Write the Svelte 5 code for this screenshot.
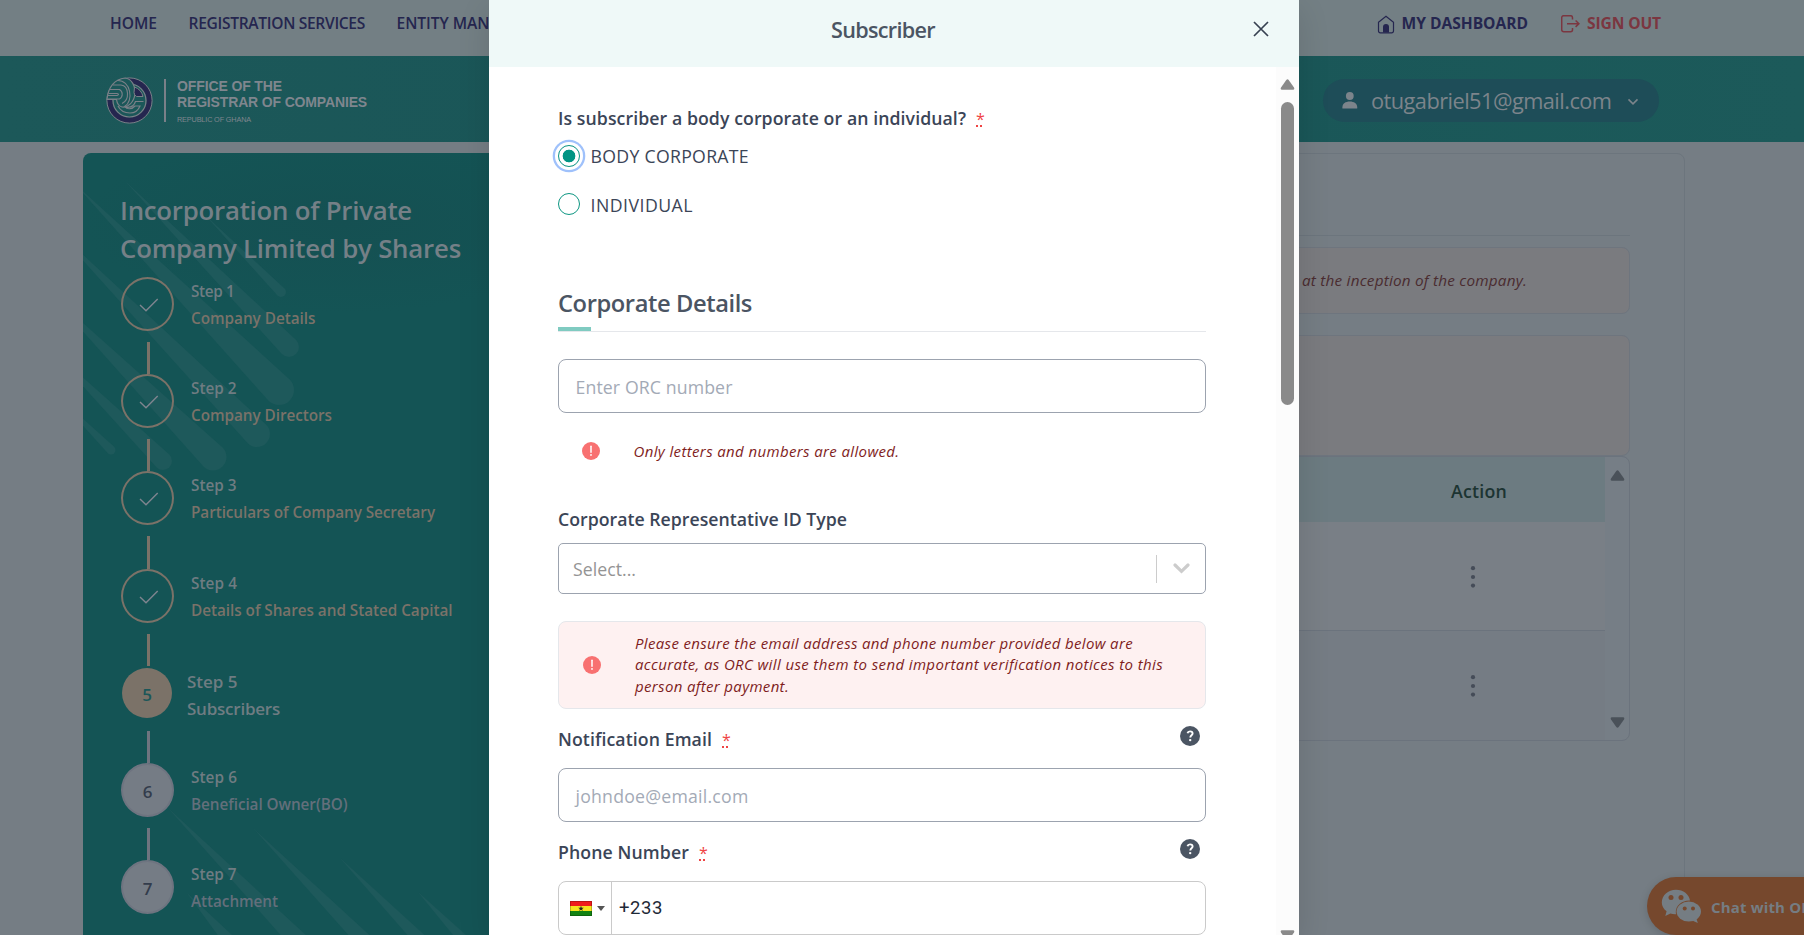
<script>
  const steps = [
    { n: 1, name: 'Company Details', state: 'done', tw: 43.5, nw: 124.5 },
    { n: 2, name: 'Company Directors', state: 'done', tw: 45.5, nw: 141 },
    { n: 3, name: 'Particulars of Company Secretary', state: 'done', tw: 45.5, nw: 244 },
    { n: 4, name: 'Details of Shares and Stated Capital', state: 'done', tw: 46, nw: 261.5 },
    { n: 5, name: 'Subscribers', state: 'current', tw: 50.5, nw: 93 },
    { n: 6, name: 'Beneficial Owner(BO)', state: 'todo', tw: 46, nw: 156.5 },
    { n: 7, name: 'Attachment', state: 'todo', tw: 45.5, nw: 87 }
  ];

  const alertLines = [
    { text: 'Please ensure the email address and phone number provided below are', w: 498 },
    { text: 'accurate, as ORC will use them to send important verification notices to this', w: 528 },
    { text: 'person after payment.', w: 154 }
  ];

  // Decorative streaks: [apex x, apex y, end x, end y, end radius]
  const streaks = [
    [205, 215, 281, 292, 5],
    [125, 181, 289, 347, 10],
    [75, 184, 279, 390, 15],
    [52, 226, 257, 434, 13],
    [45, 289, 213, 457, 13.5],
    [40, 339, 163, 461, 9],
    [50, 389, 111, 450, 4.5],
    [168, 808, 320, 963, 11],
    [253, 828, 380, 957, 9],
    [340, 858, 440, 960, 8],
    [418, 892, 480, 957, 7],
    [187, 893, 250, 964, 9]
  ];

  function streakPath([ax, ay, cx, cy, r]) {
    const d = Math.hypot(cx - ax, cy - ay);
    const nx = (-(cy - ay) / d) * r;
    const ny = ((cx - ax) / d) * r;
    return `M${ax} ${ay}L${cx - nx} ${cy - ny}A${r} ${r} 0 0 1 ${cx + nx} ${cy + ny}Z`;
  }

  // Spreads the letters so that a run of text fills the given width.
  function fit(node, width) {
    const natural = node.getBoundingClientRect().width;
    node.style.letterSpacing = `${(width - natural) / node.textContent.length}px`;
  }
</script>

{#snippet t(text, width)}<span class="t" use:fit={width}>{text}</span>{/snippet}

{#snippet required()}<abbr class="req">*</abbr>{/snippet}

{#snippet warn()}
  <svg class="warn" width="18" height="18" viewBox="0 0 18 18">
    <circle cx="9" cy="9" r="9" fill="#f87171" />
    <path d="M9 4.2v6" stroke="#fff" stroke-width="1.5" stroke-linecap="round" />
    <circle cx="9" cy="12.9" r="0.95" fill="#fff" />
  </svg>
{/snippet}

{#snippet help()}
  <svg class="help" width="20" height="20" viewBox="0 0 20 20">
    <circle cx="10" cy="10" r="10" fill="#4b5563" />
    <path d="M7.5 7.2C7.8 5.9 8.7 5.4 10 5.4c1.5 0 2.6.9 2.6 2.1 0 1.8-2.3 1.9-2.3 4" fill="none" stroke="#fff" stroke-width="1.9" />
    <circle cx="10.2" cy="14.1" r="1.2" fill="#fff" />
  </svg>
{/snippet}

{#snippet arrow(down)}
  <svg class="arrow" class:down width="15" height="11" viewBox="0 0 15 11">
    <path d="M6.3 1 1 8.4Q0 10.7 2 10.8H13Q15 10.7 14 8.4L8.7 1Q7.5-.5 6.3 1Z" fill="currentColor" />
  </svg>
{/snippet}

{#snippet kebab()}
  <svg width="6" height="24" viewBox="0 0 6 24">
    <circle cx="3" cy="3.2" r="2.1" /><circle cx="3" cy="12" r="2.1" /><circle cx="3" cy="20.6" r="2.1" />
  </svg>
{/snippet}

<div class="page">
  <nav class="topnav">
    <div class="links">
      {@render t('HOME', 47)}
      {@render t('REGISTRATION SERVICES', 176.5)}
      {@render t('ENTITY MANAGEMENT', 167)}
    </div>
    <div class="account">
      <a class="dash" href="#dashboard">
        <svg width="18" height="19" viewBox="0 0 18 19">
          <path d="M1.5 7.2 9 1.2l7.500 6V16a1.800 1.800 0 0 1-1.800 1.800H3.300A1.800 1.800 0 0 1 1.500 16Z" fill="none" stroke="currentColor" stroke-width="1.200" />
          <path d="M6 17.600v-5.500a3 3 0 0 1 6 0v5.500Z" fill="currentColor" />
        </svg>
        {@render t('MY DASHBOARD', 126.5)}
      </a>
      <a class="out" href="#signout">
        <svg width="19" height="18" viewBox="0 0 19 18" fill="none" stroke="currentColor" stroke-width="1.500">
          <path d="M11.500 4.500V2.700a2 2 0 0 0-2-2H2.700a2 2 0 0 0-2 2v12a2 2 0 0 0 2 2h6.800a2 2 0 0 0 2-2v-1.800" />
          <path d="M6 8.700h11.800M14.600 5.500l3.300 3.200-3.300 3.200" />
        </svg>
        {@render t('SIGN OUT', 74)}
      </a>
    </div>
  </nav>

  <header class="brandbar">
    <div class="brand">
      <svg width="47" height="47" viewBox="0 0 47 47">
        <circle cx="23.500" cy="23.500" r="19.800" fill="none" stroke="#25264f" stroke-width="5.400" />
        <circle cx="23.500" cy="23.500" r="22.600" fill="none" stroke="#7a8088" stroke-width="1" />
        <circle cx="23.500" cy="23.500" r="16.500" fill="#1b5759" stroke="#7a8088" stroke-width="1.200" />
        <path d="M1 22.500C2 10 9 2 19 1c7 1 10.500 8 10 16-1 8-7 14-13 13-4-1-5-4-5.500-7.500Z" fill="#1b5759" stroke="#7a8088" stroke-width="1.200" />
        <path d="M4 12.500h9.500a5.500 5.500 0 0 1 0 9.500H1.500M2.500 16.500H11q3 .8 0 2H2M7 8h8c8 1 9 15 1 18.500M11 3.500c14-1 17 21 7.500 26" fill="none" stroke="#7a8088" stroke-width="1.100" />
        <path d="M28.500 10c4.500 1.500 7.500 5 8.500 9.500h-6.500q-2.500-1.500-2.500-4Z" fill="#25264f" stroke="#7a8088" stroke-width="1" />
        <path d="M37.500 24.500h-8C28 29 24 31 19 30c2 2.500 7 2.500 10-1h5c-2 5-6 7-10 7-6 0-10-3-12-7" fill="none" stroke="#7a8088" stroke-width="1.200" />
      </svg>
      <i class="rule"></i>
      <div class="brandtext">
        <b>{@render t('OFFICE OF THE', 105)}</b>
        <b>{@render t('REGISTRAR OF COMPANIES', 190)}</b>
        <small>{@render t('REPUBLIC OF GHANA', 74)}</small>
      </div>
    </div>
    <div class="user">
      <svg width="16" height="17" viewBox="0 0 16 17" fill="currentColor">
        <circle cx="7.800" cy="4" r="3.900" />
        <path d="M.4 16.500v-1.300C.4 11.500 3.500 9.400 7.800 9.400s7.400 2.100 7.400 5.800v1.300Z" />
      </svg>
      {@render t('otugabriel51@gmail.com', 240.500)}
      <svg class="caret" width="12" height="8" viewBox="0 0 12 8"><path d="m1.500 1.400 4.500 4.400 4.500-4.400" fill="none" stroke="currentColor" stroke-width="1.600" /></svg>
    </div>
  </header>

  <div class="body">
    <aside class="side">
      <svg class="streaks" width="460" height="782" viewBox="83 153 460 782">
        {#each streaks as s}<path d={streakPath(s)} fill="#1e595b" />{/each}
      </svg>
      <h1>
        {@render t('Incorporation of Private', 292)}
        {@render t('Company Limited by Shares', 341)}
      </h1>
      <ol>
        {#each steps as s, i}
          <li class={s.state}>
            <div class="track">
              <span class="dot">
                {#if s.state === 'done'}
                  <svg width="20" height="14" viewBox="0 0 20 14"><path d="m1 7 6 5.800L18.700 1" fill="none" stroke="#7f858f" stroke-width="1.400" /></svg>
                {:else}{s.n}{/if}
              </span>
              {#if i < steps.length - 1}<i></i>{/if}
            </div>
            <div class="lbl">
              <div class="st">{@render t(`Step ${s.n}`, s.tw)}</div>
              <div class="nm">{@render t(s.name, s.nw)}</div>
            </div>
          </li>
        {/each}
      </ol>
    </aside>

    <main class="card">
      <div class="cardhead"></div>
      <div class="note">{@render t('at the inception of the company.', 225)}</div>
      <div class="note tall"></div>
      <div class="table">
        <div class="rows">
          <div class="th">{@render t('Action', 56)}</div>
          <div class="tr">{@render kebab()}</div>
          <div class="tr even">{@render kebab()}</div>
        </div>
        <div class="tscroll">{@render arrow(false)}{@render arrow(true)}</div>
      </div>
    </main>
  </div>

  <div class="chat">
    <svg width="41" height="35" viewBox="0 0 41 35">
      <path fill-rule="evenodd" d="M15 .8c7.300 0 13.200 4.600 14 10.800-8.200-.2-14.500 5-14.200 12.200l.3 1.400q-3 .2-5.700-.7L4.300 27l1.300-4.700C2.500 20 .8 17 .8 13.500.8 6.500 7 .8 15 .8Z" fill="#757d83" />
      <ellipse cx="27.800" cy="22.600" rx="12.200" ry="10" fill="#757d83" />
      <path d="m30 31 6.800 3-1.400-4.600Z" fill="#757d83" />
      <g fill="#76482d"><circle cx="10" cy="8.500" r="2.500" /><circle cx="20" cy="8.500" r="2.500" /><circle cx="23.700" cy="19.500" r="2" /><circle cx="32" cy="19.500" r="2" /></g>
    </svg>
    {@render t('Chat with ORC', 110)}
  </div>

  <section class="modal">
    <div class="mhead">
      {@render t('Subscriber', 104)}
      <svg class="x" width="16" height="16" viewBox="0 0 16 16"><path d="m1 1 14 14M15 1 1 15" stroke="#374151" stroke-width="1.700" /></svg>
    </div>
    <div class="mbody">
      <form>
        <div class="label">{@render t('Is subscriber a body corporate or an individual?', 408)}{@render required()}</div>
        <div class="radio first"><span class="ring on"></span>{@render t('BODY CORPORATE', 158.500)}</div>
        <div class="radio"><span class="ring"></span>{@render t('INDIVIDUAL', 102.500)}</div>
        <h2>{@render t('Corporate Details', 194)}</h2>
        <div class="input orc">{@render t('Enter ORC number', 157)}</div>
        <div class="hint">{@render warn()}<em>{@render t('Only letters and numbers are allowed.', 266)}</em></div>
        <div class="label rep">{@render t('Corporate Representative ID Type', 289)}</div>
        <div class="select">
          {@render t('Select...', 63)}
          <i></i>
          <svg width="17" height="11" viewBox="0 0 17 11"><path d="m2 2 6.500 6.300L15 2" fill="none" stroke="#ccc" stroke-width="3.200" stroke-linecap="round" /></svg>
        </div>
        <div class="alert">
          {@render warn()}
          <em>{#each alertLines as l}<div>{@render t(l.text, l.w)}</div>{/each}</em>
        </div>
        <div class="label email">{@render t('Notification Email', 154)}{@render required()}{@render help()}</div>
        <div class="input">{@render t('johndoe@email.com', 173)}</div>
        <div class="label phone">{@render t('Phone Number', 131)}{@render required()}{@render help()}</div>
        <div class="input tel">
          <div class="flag">
            <svg width="22" height="15" viewBox="0 0 22 15">
              <rect width="22" height="5" fill="#f01c1c" /><rect y="5" width="22" height="5" fill="#f6e41e" /><rect y="10" width="22" height="5" fill="#128212" />
              <rect x=".5" y=".5" width="21" height="14" fill="none" stroke="#000" stroke-opacity=".22" />
              <path d="m11 4.800.7 2h2.100l-1.700 1.200.7 2L11 8.800l-1.800 1.200.7-2-1.700-1.200h2.100Z" fill="#222" />
            </svg>
            <svg width="8" height="5" viewBox="0 0 8 5"><path d="M0 0h8L4 5Z" fill="#555" /></svg>
          </div>
          {@render t('+233', 44)}
        </div>
      </form>
      <div class="mscroll">{@render arrow(false)}<i></i><span class="endarrow">{@render arrow(true)}</span></div>
    </div>
  </section>
</div>

<style>
  :global(body) { margin: 0; overflow: hidden; }
  .page, .page * { box-sizing: border-box; }
  .page { position: relative; width: 1804px; height: 935px; overflow: hidden; background: #757d84; font-family: 'Open Sans', 'Noto Sans', sans-serif; }
  svg { display: block; flex: none; }
  .t { display: inline-block; white-space: nowrap; }

  .topnav { height: 56px; background: #737f84; display: flex; justify-content: space-between; padding: 12px 143px 0 110px; font-size: 15.600px; line-height: 23px; font-weight: 600; color: #25264f; }
  .links { display: flex; gap: 31.500px; }
  .account { display: flex; gap: 33px; font-weight: 700; }
  .account a { display: flex; gap: 7px; color: inherit; text-decoration: none; }
  .account svg { margin-top: 2.500px; }
  .account .out { color: #7b3640; }

  .brandbar { height: 86px; background: linear-gradient(90deg, #1c5859, #195557 55%, #1c5a5a); display: flex; justify-content: space-between; padding: 0 145px 0 106px; }
  .brand { display: flex; padding-top: 20.500px; }
  .rule { width: 2px; height: 43px; margin: 2.500px 11px 0 11px; background: #7a8088; }
  .brandtext { font-family: 'Liberation Sans', sans-serif; color: #7f868e; padding-top: 1.500px; }
  .brandtext b { display: block; font-size: 14px; line-height: 16px; height: 16px; }
  .brandtext small { display: block; font-size: 7.300px; line-height: 10px; margin-top: 4.500px; font-weight: 400; }
  .user { width: 336px; height: 43px; margin-top: 23px; border-radius: 22px; background: #1e4d58; color: #7c848b; display: flex; align-items: center; padding-left: 19px; font-size: 21.800px; }
  .user .t { margin-left: 13px; }
  .user .caret { margin-left: 15px; margin-top: 2px; }

  .body { display: flex; justify-content: space-between; padding: 11px 120px 0 83px; }
  .side { position: relative; width: 460px; height: 790px; border-radius: 8px; background: radial-gradient(ellipse 260px 90px at 260px 70px, #155052, #145455); padding: 38px 0 0 37px; overflow: hidden; }
  .streaks { position: absolute; left: 0; top: 0; }
  h1 { position: relative; margin: 0; font-size: 25.800px; font-weight: 600; line-height: 38px; color: #758087; height: 86px; }
  h1 .t { display: table; }
  ol { position: relative; list-style: none; margin: 0; padding: 0 0 0 1px; }
  li { display: flex; height: 97.200px; color: #6f7c82; font-weight: 600; font-size: 15.300px; line-height: 27px; }
  .track { width: 53px; display: flex; flex-direction: column; align-items: center; }
  .dot { width: 53px; height: 54px; border-radius: 50%; border: 2px solid #7b7268; display: flex; align-items: center; justify-content: center; flex: none; font-size: 17px; font-weight: 600; padding-top: 3px; }
  .dot svg { margin: -1px 0 0 3px; }
  .track i { width: 3px; height: 32.200px; margin: 11px 0 0 2px; background: #7b7268; }
  .lbl { padding: 1px 0 0 17px; }
  .done .nm { color: #7a7269; }
  .current { font-size: 17px; }
  .current .dot { width: 50px; height: 50px; margin: 2px 0 2px -1px; background: #7b7268; border: 0; color: #1b5759; }
  .current .track i, .todo .track i { background: #6f747f; }
  .current .lbl { padding: 2px 0 0 13px; }
  .todo .dot { background: #757c85; border-color: #6e7480; color: #333c4c; }
  .todo .nm { color: #636f7b; }

  .card { width: 1125px; height: 790px; margin-right: -1px; border: 1px solid #6c757d; border-radius: 8px; padding: 0 54px 0 60px; }
  .cardhead { height: 82px; border-bottom: 1px solid #6c757d; margin-bottom: 11px; }
  .note { height: 67px; border: 1px solid #6e757e; border-radius: 8px; background: #7a7b7f; display: flex; align-items: center; justify-content: flex-end; padding: 0 102px 1px 0; font-size: 15.300px; font-style: italic; color: #4a2c30; }
  .note.tall { height: 121px; margin-top: 21px; }
  .table { height: 285px; border: 1px solid #6b737d; border-radius: 8px; background: #767e86; display: flex; overflow: hidden; }
  .rows { flex: 1; }
  .tscroll { width: 24px; display: flex; flex-direction: column; justify-content: space-between; align-items: center; padding: 13px 0 12px; color: #4a5159; }
  .th { height: 65px; background: #6c7b81; display: flex; align-items: center; justify-content: flex-end; padding-right: 98px; font-size: 17.800px; font-weight: 600; color: #1c3432; padding-top: 2px; }
  .tr { height: 109px; display: flex; justify-content: flex-end; align-items: center; padding: 1px 129px 0 0; background: #797f86; border-bottom: 1px solid #6b737d; fill: #454c58; }
  .tr.even { background: #757c84; border: 0; }
  .down { transform: rotate(180deg); }

  .chat { position: absolute; left: 1647px; top: 877px; width: 200px; height: 58px; border-radius: 29px; background: #76482d; box-shadow: 0 2px 8px rgba(0, 0, 0, 0.15); display: flex; align-items: center; padding-left: 14px; font-size: 15px; font-weight: 700; color: #757d83; }
  .chat .t { margin-left: 9px; padding-top: 2px; }

  .modal { position: absolute; left: 489px; top: 0; width: 810px; height: 935px; background: #fff; box-shadow: 0 10px 30px rgba(0, 0, 0, 0.12); }
  .mhead { position: relative; height: 67px; background: #eff9f8; padding: 10.500px 0 0 342px; font-size: 21.600px; line-height: 38px; font-weight: 600; color: #4b5563; }
  .x { position: absolute; left: 764px; top: 21px; }
  .mbody { display: flex; justify-content: space-between; height: 868px; padding-left: 69px; }
  form { width: 648px; padding-top: 37px; }
  .mscroll { width: 23px; background: #fcfcfc; color: #8a8a8a; padding: 12px 0 0 4px; }
  .mscroll i { display: block; width: 13px; height: 303px; margin: 12px 0 0 1px; border-radius: 7px; background: #8a8a8a; }
  .endarrow { display: block; margin-top: 525px; }
  .label { display: flex; height: 28px; line-height: 28px; font-size: 17.700px; font-weight: 600; color: #3b4557; }
  .req { margin: 3px 0 0 8px; padding: 0 2px; height: 20px; line-height: 24px; color: #ef4444; font-weight: 400; font-size: 16px; text-decoration: none; background: linear-gradient(90deg, #ef4444 2px, transparent 2px 4px, #ef4444 4px 6px, transparent 6px) 2px 100% / 6px 2px no-repeat; }
  .help { margin: 1px 6px 0 auto; }
  .radio { display: flex; align-items: center; height: 48px; font-size: 17.700px; color: #3b4557; }
  .radio .t { margin-left: 10.500px; padding-top: 2px; }
  .radio.first .t { padding-top: 0; }
  .ring { width: 22px; height: 22px; border: 1px solid #0d9682; border-radius: 50%; }
  .ring.on { background: radial-gradient(circle, #009483 6px, #fff 6.700px); box-shadow: 0 0 0 3px #fff, 0 0 0 5.300px #9fc1fb; }
  h2 { position: relative; margin: 54px 0 0; height: 50px; border-bottom: 1px solid #e5e7eb; padding-top: 1px; font-size: 23.700px; line-height: 40px; font-weight: 600; color: #4b5563; }
  h2::after { content: ''; position: absolute; left: 0; bottom: 0; width: 33px; height: 4px; background: #80cbc1; }
  .input { height: 54px; border: 1px solid #9ca3af; border-radius: 8px; display: flex; align-items: center; padding: 1px 0 0 16.500px; font-size: 17.700px; color: #a3aab6; }
  .orc { margin-top: 27px; }
  .hint { height: 75px; display: flex; align-items: center; padding: 1px 0 0 23.500px; font-size: 15px; color: #7f1d1d; }
  .hint em, .alert em { margin-left: 34px; }
  .rep { margin-top: 17px; }
  .select { margin-top: 10px; height: 51px; border: 1px solid #9ca3af; border-radius: 5px; display: flex; align-items: center; padding-left: 14px; font-size: 17.700px; color: #949494; }
  .select .t { padding-top: 1px; }
  .select i { width: 1px; height: 28px; margin: 0 16px 0 auto; background: #ccc; }
  .select svg { margin-right: 15px; }
  .alert { margin-top: 27px; height: 88px; border: 1px solid #e5e7eb; border-radius: 8px; background: #fef1f1; display: flex; align-items: center; padding-left: 24px; font-size: 15px; line-height: 21.600px; color: #7f1d1d; }
  .email, .phone { margin: 16px 0 15px; }
  .tel { border-color: #cacaca; color: #1f2937; padding: 0; font-family: Roboto, sans-serif; font-size: 18.500px; }
  .flag { width: 53px; height: 52px; border-right: 1px solid #cacaca; display: flex; align-items: center; gap: 5px; padding-left: 11px; margin-right: 7px; }
</style>
